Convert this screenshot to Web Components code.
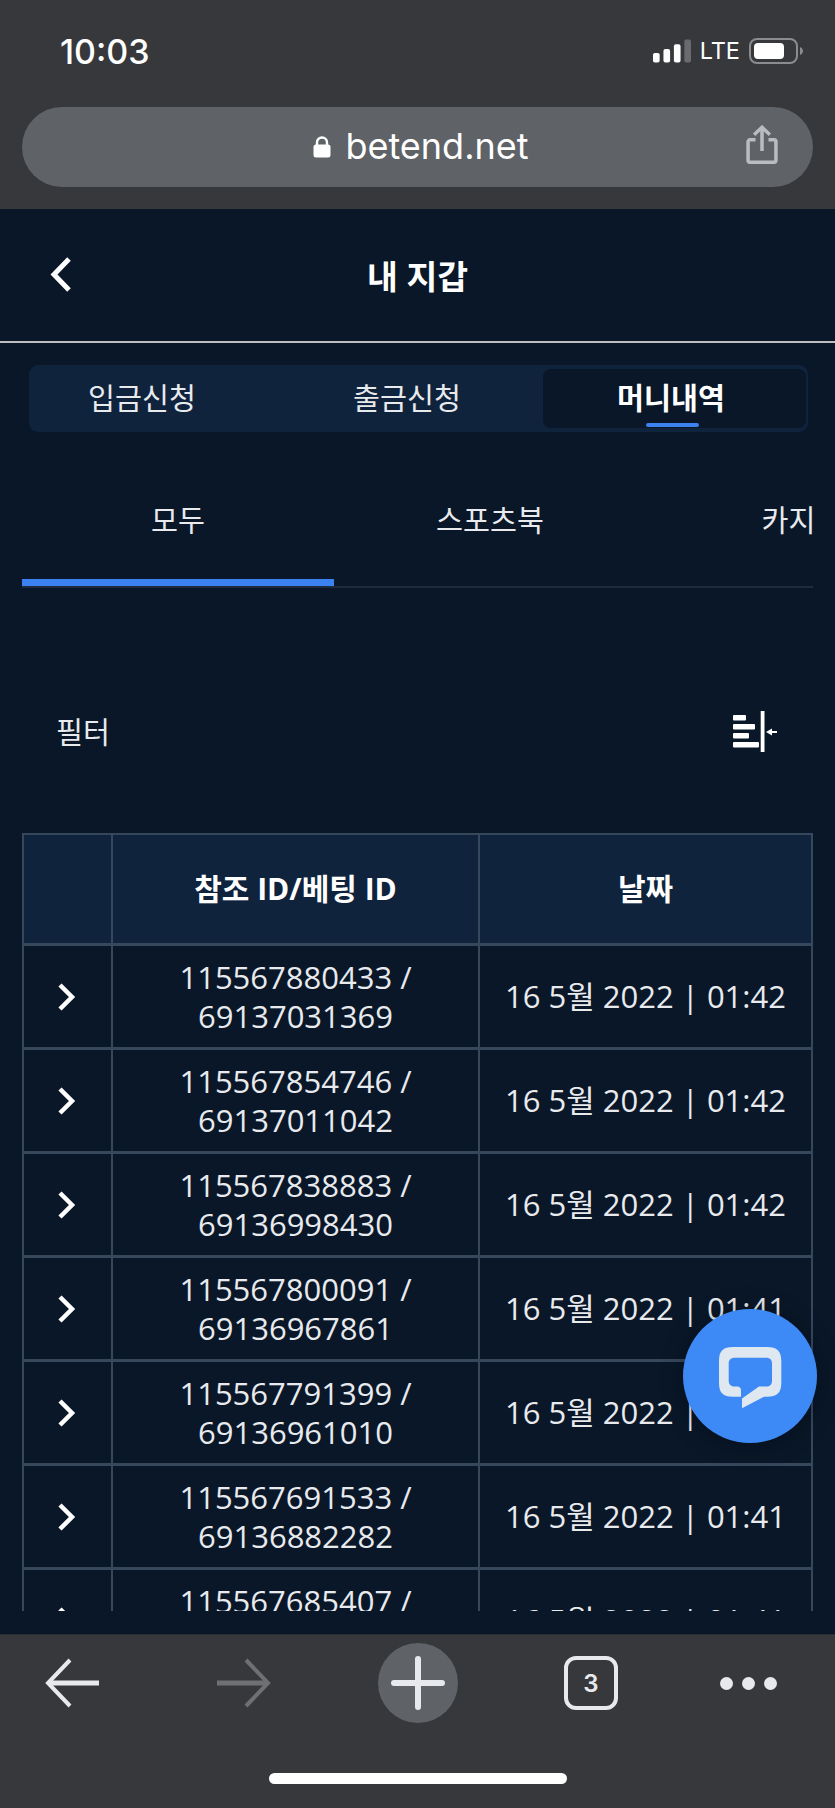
<!DOCTYPE html>
<html lang="ko">
<head>
<meta charset="utf-8">
<title>내 지갑</title>
<style>
	html, body { margin: 0; height: 100%; }
	body {
		width: 835px;
		height: 1808px;
		overflow: hidden;
		display: flex;
		flex-direction: column;
		background: #091728;
		color: #fff;
		font-family: "Open Sans", "Noto Sans CJK KR", sans-serif;
	}
	main { flex: 1; min-height: 0; display: flex; flex-direction: column; position: relative; }
</style>
</head>
<body>
<browser-top url="betend.net" time="10:03"></browser-top>
<main>
	<wallet-header>내 지갑</wallet-header>
	<seg-tabs></seg-tabs>
	<type-tabs></type-tabs>
	<filter-row>필터</filter-row>
	<money-table></money-table>
	<chat-fab></chat-fab>
</main>
<browser-toolbar></browser-toolbar>

<script>
class BrowserTop extends HTMLElement {
	constructor() {
		super();
		this.attachShadow({ mode: 'open' });
		this.shadowRoot.innerHTML = `
			<style>
				:host { display: block; height: 209px; background: #37383c; font-family: Inter, "Liberation Sans", sans-serif; }
				.status { height: 107px; box-sizing: border-box; padding: 35px 32px 0 60px; display: flex; justify-content: space-between; align-items: flex-start; }
				.time { font-size: 34px; font-weight: 500; line-height: 33px; }
				.right { display: flex; align-items: center; height: 32px; }
				.lte { font-size: 23.500px; line-height: 32px; margin: 0 9px 0 9px; }
				.url { margin: 0 22px; height: 80px; border-radius: 40px; background: #5f6266; position: relative; display: flex; align-items: center; justify-content: center; padding-left: 7px; }
				.addr { font-size: 36px; line-height: 78px; margin-left: 14px; margin-bottom: 2px; }
				.share { position: absolute; right: 35px; top: 18px; }
			</style>
			<div class="status">
				<span class="time">${this.getAttribute('time')}</span>
				<span class="right">
					<svg width="38" height="26" viewBox="0 0 40 26">
						<rect x="0" y="15" width="7" height="10" rx="2" fill="#fff"/>
						<rect x="11" y="11" width="7" height="14" rx="2" fill="#fff"/>
						<rect x="22" y="6" width="7" height="19" rx="2" fill="#fff"/>
						<rect x="33" y="1" width="7" height="24" rx="2" fill="#6a6b6e"/>
					</svg>
					<span class="lte">LTE</span>
					<svg width="54" height="26" viewBox="0 0 54 26">
						<rect x="1" y="1" width="47" height="24" rx="7" fill="none" stroke="#8b8c8f" stroke-width="2"/>
						<rect x="5" y="5" width="30" height="16" rx="4" fill="#fff"/>
						<path d="M51 9c2 1 3 2.500 3 4s-1 3-3 4z" fill="#8b8c8f"/>
					</svg>
				</span>
			</div>
			<div class="url">
				<svg width="18" height="22" viewBox="0 0 18 22">
					<path d="M4 10V6.500a5 5 0 0 1 10 0V10" fill="none" stroke="#fff" stroke-width="2.400"/>
					<rect x="0.500" y="8.500" width="17" height="13" rx="2.500" fill="#fff"/>
				</svg>
				<span class="addr">${this.getAttribute('url')}</span>
				<svg class="share" width="32" height="39" viewBox="0 0 34 42" fill="none" stroke="#b9bcc1" stroke-width="3.800">
					<path d="M10 16H4a2 2 0 0 0-2 2v20a2 2 0 0 0 2 2h26a2 2 0 0 0 2-2V18a2 2 0 0 0-2-2h-6"/>
					<path d="M17 28V3"/>
					<path d="M8.500 10.500L17 2.500l8.500 8"/>
				</svg>
			</div>
		`;
	}
}
customElements.define('browser-top', BrowserTop);

class WalletHeader extends HTMLElement {
	constructor() {
		super();
		this.attachShadow({ mode: 'open' });
		this.shadowRoot.innerHTML = `
			<style>
				:host { display: grid; grid-template-columns: 100px 1fr 100px; align-items: center; height: 134px; box-sizing: border-box; border-bottom: 2px solid #bdbec0; }
				svg { margin-left: 49px; margin-top: -1px; }
				.title { text-align: center; font-size: 33.500px; font-weight: 700; margin-top: -1px; }
			</style>
			<svg width="24" height="36" viewBox="0 0 24 36"><path d="M20 2L5 17.500 20 33" fill="none" stroke="#fff" stroke-width="5"/></svg>
			<div class="title"><slot></slot></div>
			<span></span>
		`;
	}
}
customElements.define('wallet-header', WalletHeader);

class SegTabs extends HTMLElement {
	constructor() {
		super();
		this.attachShadow({ mode: 'open' });
		this.shadowRoot.innerHTML = `
			<style>
				:host { display: grid; grid-template-columns: 1fr 1fr 263px; margin: 22px 27px 0 29px; height: 67px; box-sizing: border-box; padding: 4px 2px 4px 0; background: #0f233d; border-radius: 9px; font-size: 29.300px; }
				div { display: flex; align-items: center; justify-content: center; padding-bottom: 4px; position: relative; color: #e8eaed; }
				.a { padding-right: 31px; }
				.b { padding-right: 15px; }
				.on { background: #091728; border-radius: 8px; font-weight: 700; color: #fff; padding-right: 7px; }
				.on::after { content: ""; position: absolute; left: 103px; bottom: 1px; width: 53px; height: 4px; border-radius: 2px; background: #3b82f0; }
			</style>
			<div class="a">입금신청</div><div class="b">출금신청</div><div class="on">머니내역</div>
		`;
	}
}
customElements.define('seg-tabs', SegTabs);

class TypeTabs extends HTMLElement {
	constructor() {
		super();
		this.attachShadow({ mode: 'open' });
		this.shadowRoot.innerHTML = `
			<style>
				:host { display: block; margin: 0 22px; height: 156px; position: relative; overflow: hidden; border-bottom: 2px solid #1e2b3d; box-sizing: border-box; font-size: 29.300px; }
				.row { display: flex; height: 147px; align-items: center; padding-top: 26px; box-sizing: border-box; }
				.row span { flex: 0 0 312px; text-align: center; color: #e8eaed; white-space: nowrap; }
				.bar { position: absolute; left: 0; bottom: 0; width: 312px; height: 7px; background: #3b82f0; }
			</style>
			<div class="row"><span>모두</span><span>스포츠북</span><span>카지노</span></div>
			<div class="bar"></div>
		`;
	}
}
customElements.define('type-tabs', TypeTabs);

class FilterRow extends HTMLElement {
	constructor() {
		super();
		this.attachShadow({ mode: 'open' });
		this.shadowRoot.innerHTML = `
			<style>
				:host { display: flex; justify-content: space-between; align-items: center; margin-top: 114px; height: 58px; padding: 0 58px 0 56px; font-size: 29.300px; color: #e8eaed; }
				span { padding-bottom: 2px; }
			</style>
			<span><slot></slot></span>
			<svg width="44" height="41" viewBox="0 0 44 41">
				<g fill="#fff">
					<rect x="0" y="4" width="13" height="5.500" rx="1"/>
					<rect x="0" y="13" width="22" height="5.500" rx="1"/>
					<rect x="0" y="22" width="16" height="5.500" rx="1"/>
					<rect x="0" y="31" width="26" height="5.500" rx="1"/>
					<rect x="27.700" y="0" width="3.800" height="41"/>
					<path d="M33 21l6-3.500V20h5v2h-5v2.500z"/>
				</g>
			</svg>
		`;
	}
}
customElements.define('filter-row', FilterRow);

class MoneyRow extends HTMLElement {
	constructor() {
		super();
		this.attachShadow({ mode: 'open' });
		this.shadowRoot.innerHTML = `
			<style>
				:host { display: grid; grid-template-columns: 89px 367px 1fr; height: 104px; box-sizing: border-box; border-bottom: 3px solid #37475c; font-size: 31px; line-height: 39px; color: #e8eaed; flex: none; }
				div { display: flex; align-items: center; justify-content: center; text-align: center; border-right: 2px solid #37475c; white-space: nowrap; }
				div:last-child { border-right: 0; }
				span { display: block; white-space: pre-line; }
				svg { margin-right: 3px; }
			</style>
			<div><svg width="20" height="28" viewBox="0 0 20 28"><path d="M4 2l12 12L4 26" fill="none" stroke="#fff" stroke-width="4.500"/></svg></div>
			<div><span>${this.getAttribute('ref-id')} /\n${this.getAttribute('bet-id') || '\u00a0'}</span></div>
			<div>${this.getAttribute('date')}</div>
		`;
	}
}
customElements.define('money-row', MoneyRow);

class MoneyTable extends HTMLElement {
	constructor() {
		super();
		this.attachShadow({ mode: 'open' });
		const filas = [
			['115567880433', '69137031369', '16 5월 2022 | 01:42'],
			['115567854746', '69137011042', '16 5월 2022 | 01:42'],
			['115567838883', '69136998430', '16 5월 2022 | 01:42'],
			['115567800091', '69136967861', '16 5월 2022 | 01:41'],
			['115567791399', '69136961010', '16 5월 2022 | 01:41'],
			['115567691533', '69136882282', '16 5월 2022 | 01:41'],
			['115567685407', '', '16 5월 2022 | 01:41']
		];
		this.shadowRoot.innerHTML = `
			<style>
				:host { display: flex; flex-direction: column; margin: 73px 22px 0; height: 778px; overflow: hidden; box-sizing: border-box; border: solid #37475c; border-width: 2px 2px 0; flex: none; }
				.head { display: grid; grid-template-columns: 89px 367px 1fr; height: 111px; box-sizing: border-box; background: #0f233d; border-bottom: 3px solid #37475c; font-size: 30px; font-weight: 700; flex: none; }
				.head div { display: flex; align-items: center; justify-content: center; border-right: 2px solid #37475c; padding-bottom: 4px; }
				.head div:last-child { border-right: 0; }
			</style>
			<div class="head"><div></div><div>참조 ID/베팅 ID</div><div>날짜</div></div>
			${filas.map(f => `<money-row ref-id="${f[0]}" bet-id="${f[1]}" date="${f[2]}"></money-row>`).join('')}
		`;
	}
}
customElements.define('money-table', MoneyTable);

class ChatFab extends HTMLElement {
	constructor() {
		super();
		this.attachShadow({ mode: 'open' });
		this.shadowRoot.innerHTML = `
			<style>
				:host { position: absolute; left: 683px; top: 1100px; width: 134px; height: 134px; border-radius: 50%; background: #3d8af7; display: flex; align-items: center; justify-content: center; box-shadow: 0 2px 24px rgba(0,0,0,.3); }
				svg { margin-top: 4px; }
			</style>
			<svg width="63" height="62" viewBox="0 0 63 62">
				<path fill="#dfe8f1" d="M14 0H48C58 0 62.300 4 62.300 14V36C62.300 46 58 49.700 48 49.700H45L23 61.300V51.500L40 39.500H47C51 39.500 53 37.500 53 33.500V16.700C53 12.700 51 10.700 47 10.700H16C12 10.700 9.700 12.700 9.700 16.700V33.500C9.700 37.500 12 39.500 16 39.500H18C20.500 39.500 22 41 22 43V49.700H14C4 49.700 0 46 0 36V14C0 4 4 0 14 0Z"/>
			</svg>
		`;
	}
}
customElements.define('chat-fab', ChatFab);

class BrowserToolbar extends HTMLElement {
	constructor() {
		super();
		this.attachShadow({ mode: 'open' });
		this.shadowRoot.innerHTML = `
			<style>
				:host { display: block; height: 174px; background: #37383c; border-top: 1px solid #2c2d30; box-sizing: border-box; font-family: Inter, "Liberation Sans", sans-serif; }
				.icons { display: flex; align-items: center; height: 80px; margin-top: 8px; padding-left: 45px; }
				.fwd { margin-left: 118px; }
				.plus { margin-left: 107px; width: 80px; height: 80px; border-radius: 50%; background: #5f6266; display: flex; align-items: center; justify-content: center; }
				.count { margin-left: 106px; width: 54px; height: 54px; box-sizing: border-box; border: 4px solid #e8e9ec; border-radius: 12px; display: flex; align-items: center; justify-content: center; font-size: 24px; font-weight: 600; color: #e8e9ec; }
				.dots { margin-left: 102px; display: flex; gap: 9px; }
				.dots i { width: 13px; height: 13px; border-radius: 50%; background: #e8e9ec; }
				.home { width: 298px; height: 11px; border-radius: 6px; background: #fff; margin: 50px auto 0; }
			</style>
			<div class="icons">
				<svg width="54" height="50" viewBox="0 0 54 50" fill="none" stroke="#e8e9ec" stroke-width="5"><path d="M54 25H4"/><path d="M25 2L3 25l22 23" stroke-width="4"/></svg>
				<svg class="fwd" width="54" height="50" viewBox="0 0 54 50" fill="none" stroke="#6f7073" stroke-width="5"><path d="M0 25h50"/><path d="M29 2l22 23-22 23" stroke-width="4"/></svg>
				<span class="plus"><svg width="54" height="54" viewBox="0 0 54 54" fill="none" stroke="#e8e9ec" stroke-width="6" stroke-linecap="round"><path d="M27 3v48M3 27h48"/></svg></span>
				<span class="count">3</span>
				<span class="dots"><i></i><i></i><i></i></span>
			</div>
			<div class="home"></div>
		`;
	}
}
customElements.define('browser-toolbar', BrowserToolbar);
</script>
</body>
</html>
